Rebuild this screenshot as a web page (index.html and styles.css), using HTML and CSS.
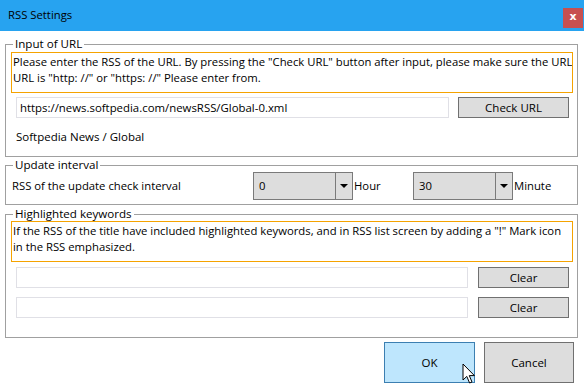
FILE: index.html
```html
<!DOCTYPE html>
<html>
<head>
<meta charset="utf-8">
<link rel="stylesheet" href="styles.css">
</head>
<body>
<div class="window">
  <div class="titlebar">
    <span class="title">RSS Settings</span>
    <span class="close">x</span>
  </div>
  <div class="content">
    <fieldset class="group g1">
      <legend>Input of URL</legend>
      <div class="note">Please enter the RSS of the URL. By pressing the "Check URL" button after input, please make sure the URL<br>URL is "http: //" or "https: //" Please enter from.</div>
      <div class="row url-row">
        <div class="textbox url">https://news.softpedia.com/newsRSS/Global-0.xml</div>
        <button class="btn check">Check URL</button>
      </div>
      <div class="feed-name">Softpedia News / Global</div>
    </fieldset>
    <fieldset class="group g2">
      <legend>Update interval</legend>
      <div class="row interval-row">
        <span class="int-label">RSS of the update check interval</span>
        <div class="combo"><span class="combo-val">0</span><span class="combo-arrow"></span></div>
        <span class="unit hour">Hour</span>
        <div class="combo"><span class="combo-val">30</span><span class="combo-arrow"></span></div>
        <span class="unit">Minute</span>
      </div>
    </fieldset>
    <fieldset class="group g3">
      <legend>Highlighted keywords</legend>
      <div class="note">If the RSS of the title have included highlighted keywords, and in RSS list screen by adding a "!" Mark icon<br>in the RSS emphasized.</div>
      <div class="row kw-row first">
        <div class="textbox kw"></div>
        <button class="btn clear">Clear</button>
      </div>
      <div class="row kw-row">
        <div class="textbox kw"></div>
        <button class="btn clear">Clear</button>
      </div>
    </fieldset>
    <div class="actions">
      <button class="btn ok">OK</button>
      <button class="btn cancel">Cancel</button>
    </div>
  </div>
  <svg class="cursor" width="14" height="22" viewBox="0 0 14 22"><path d="M1 1 L1 17 L4.8 13.4 L7.6 20 L10 19 L7.3 12.6 L12.4 12.6 Z" fill="#fff" stroke="#000" stroke-width="1" stroke-linejoin="miter"/></svg>
</div>
</body>
</html>
```

FILE: styles.css
```css
* { box-sizing: border-box; }
html, body { margin: 0; padding: 0; background: #fff; }
body {
  font-family: "Open Sans", "Noto Sans", sans-serif;
  font-size: 11.3px;
  color: #000;
}
.window { position: relative; width: 584px; height: 392px; overflow: hidden; }
.titlebar {
  height: 31px;
  background: #27a3f0;
  display: flex;
  align-items: center;
  justify-content: space-between;
  padding-left: 8px;
  padding-right: 1px;
}
.title { font-size: 11.3px; line-height: 16px; margin-top: -1px; }
.close {
  width: 20px;
  height: 20px;
  background: #c75050;
  color: #fff;
  font-weight: bold;
  font-size: 11px;
  line-height: 18px;
  text-align: center;
  margin-top: 4px;
  font-family: "DejaVu Sans", sans-serif;
}
.content { padding: 0 0 0 5px; }
.group {
  margin: 0;
  padding: 0;
  width: 573px;
  border: 1px solid #a0a0a0;
  min-width: 0;
}
.group legend {
  padding: 0 2px;
  margin-left: 7px;
  line-height: 14px;
  font-size: 11.6px;
}
.g1 { margin-top: 6px; padding-bottom: 11px; }
.g2 { margin-top: 1px; padding-bottom: 4px; }
.g3 { margin-top: 2px; padding-bottom: 19px; }
.note {
  margin: 1px 0 0 5px;
  width: 562px;
  height: 41px;
  border: 1px solid #f5a300;
  padding: 1px 0 0 1px;
  line-height: 16px;
  white-space: nowrap;
  overflow: hidden;
}
.g3 .note { margin-top: 0; }
.row { display: flex; align-items: center; }
.url-row { margin-top: 4px; margin-left: 10px; }
.textbox {
  height: 21px;
  border: 1px solid #e0e0e6;
  background: #fff;
  line-height: 19px;
  padding-left: 3px;
  white-space: nowrap;
}
.url { width: 433px; font-size: 11.4px; }
.btn {
  font-family: inherit;
  font-size: 11.5px;
  color: #000;
  background: #dddddd;
  border: 1px solid #707070;
  padding: 0;
  margin: 0;
  line-height: 17px;
}
.check { width: 111px; height: 21px; margin-left: 9px; }
.feed-name { margin: 11px 0 0 10px; line-height: 16px; font-size: 11.5px; }
.interval-row { margin-left: 6px; }
.int-label { width: 241px; line-height: 16px; font-size: 11.3px; }
.combo {
  width: 100px;
  height: 28px;
  border: 1px solid #7a7a7a;
  background: #dddddd;
  display: flex;
}
.combo-val { flex: 1; padding-left: 5px; line-height: 25px; border-right: 1px solid #7a7a7a; }
.combo-arrow { width: 16px; position: relative; }
.combo-arrow::after {
  content: "";
  position: absolute;
  left: 4px;
  top: 11px;
  border-left: 4px solid transparent;
  border-right: 4px solid transparent;
  border-top: 4px solid #000;
}
.unit { line-height: 16px; padding-left: 1px; }
.hour { width: 60px; }
.kw-row { margin-left: 10px; margin-top: 9px; }
.kw-row.first { margin-top: 5px; }
.kw { width: 452px; }
.clear { width: 91px; height: 21px; margin-left: 10px; }
.actions { display: flex; justify-content: flex-end; gap: 9px; margin-top: 4px; padding-right: 10px; }
.ok { width: 91px; height: 41px; background: #bee6fd; border-color: #3c7fb1; }
.cancel { width: 90px; height: 41px; }
.cursor { position: absolute; left: 462px; top: 363px; }
```
